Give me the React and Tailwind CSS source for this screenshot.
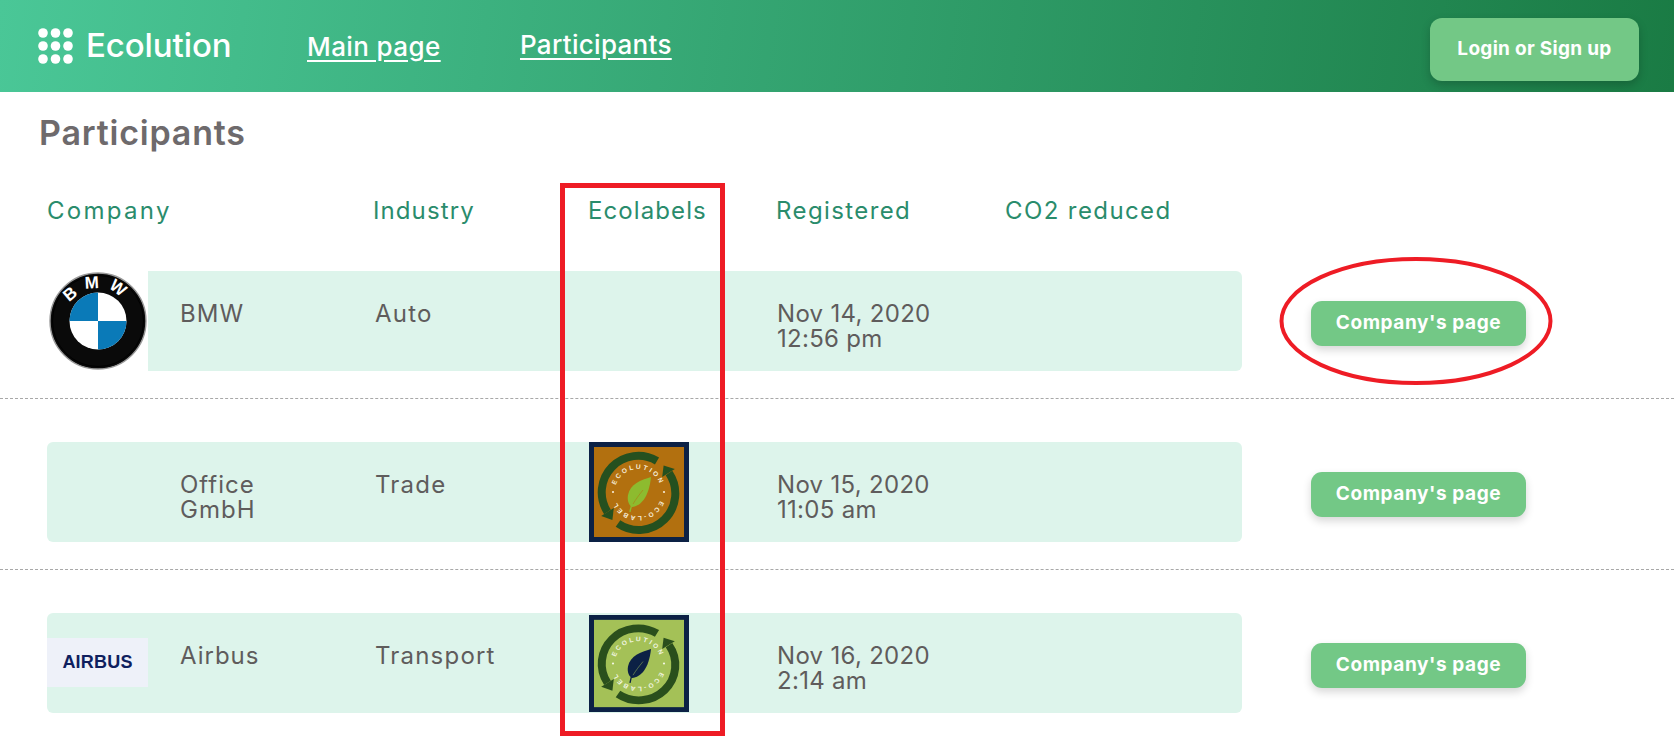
const rows = [
  { name: ['BMW'], industry: 'Auto', date: 'Nov 14, 2020', time: '12:56 pm', logo: 'bmw' },
  { name: ['Office', 'GmbH'], industry: 'Trade', date: 'Nov 15, 2020', time: '11:05 am', label: { bg: '#b2700f', ring: '#25501f', leaf: '#8dbb2f', vein: '#b2700f', text: '#f5ecd8', h: 'h-[100px]' } },
  { name: ['Airbus'], industry: 'Transport', date: 'Nov 16, 2020', time: '2:14 am', logo: 'airbus', label: { bg: '#a4c157', ring: '#2a4f1c', leaf: '#0c2145', vein: '#a4c157', text: '#f2f6e2', h: 'h-[97px]' } },
]

function BmwLogo() {
  return (
    <div className="w-[101px] h-[100px] bg-white flex items-center justify-center">
      <svg width="98" height="98" viewBox="0 0 98 98">
        <circle cx="49" cy="49" r="48" fill="#0a0a0a" stroke="#9a9a9a" strokeWidth="1.4" />
        <circle cx="49" cy="49" r="45.5" fill="none" stroke="#000" strokeWidth="1" />
        <circle cx="49" cy="49" r="28.5" fill="#fff" />
        <path d="M49 49V20.5A28.5 28.5 0 0 0 20.5 49Z" fill="#0a7ab8" />
        <path d="M49 49V77.500A28.5 28.5 0 0 0 77.500 49Z" fill="#0a7ab8" />
        <path id="bmwArc" d="M16 49A33 33 0 0 1 82 49" fill="none" />
        <text fill="#fff" fontSize="17" fontWeight="700" fontFamily="Liberation Sans, sans-serif" textAnchor="middle">
          <textPath href="#bmwArc" startOffset="50%" letterSpacing="8">BMW</textPath>
        </text>
      </svg>
    </div>
  )
}

function AirbusLogo() {
  return (
    <div className="w-[101px] h-[49px] mt-[25px] bg-[#eef1f9] flex items-center justify-center">
      <span className="font-['Liberation_Sans',sans-serif] font-bold text-[18px] tracking-[0.2px] text-[#0f1f5f]">AIRBUS</span>
    </div>
  )
}

function EcoLabel({ id, bg, ring, leaf, vein, text, h }) {
  return (
    <svg className={`w-[100px] ${h}`} viewBox="0 0 100 100" preserveAspectRatio="none">
      <rect x="2.5" y="2.5" width="95" height="95" fill={bg} stroke="#0c2145" strokeWidth="5" />
      <path d="M68 19A36.5 36.5 0 0 0 18.5 70" fill="none" stroke={ring} strokeWidth="8" />
      <path d="M29 81.5A36.5 36.5 0 0 0 80 31" fill="none" stroke={ring} strokeWidth="8" />
      <polygon points="12.2,74 24.8,66 23.4,78" fill={ring} />
      <polygon points="85.8,27 73.2,35 74.6,23.4" fill={ring} />
      <path d="M62 35C52 38 41 42 39 53C38 59 40 63 43 65C52 64 60 55 62 35Z" fill={leaf} />
      <path d="M41 70C42 62 46 55 52 49" fill="none" stroke={leaf} strokeWidth="1.4" />
      <path d="M44 62C47 57 50 53 54 48" fill="none" stroke={vein} strokeWidth="0.5" />
      <path id={id} d="M25.5 50.5A23.5 23.5 0 1 1 72.5 50.5A23.5 23.5 0 1 1 25.5 50.5" fill="none" />
      <text fill={text} fontSize="6.6" fontWeight="700" fontFamily="Liberation Sans Narrow, Liberation Sans, sans-serif" textAnchor="middle" letterSpacing="2.2">
        <textPath href={`#${id}`} startOffset="25%">ECOLUTION</textPath>
      </text>
      <text fill={text} fontSize="6.6" fontWeight="700" fontFamily="Liberation Sans Narrow, Liberation Sans, sans-serif" textAnchor="middle" letterSpacing="2">
        <textPath href={`#${id}`} startOffset="75%">ECO-LABEL</textPath>
      </text>
      <circle cx="24" cy="50" r="1.1" fill={text} />
      <circle cx="75" cy="50" r="1.1" fill={text} />
    </svg>
  )
}

function Row({ row, index }) {
  return (
    <div className={`flex pl-[47px] pb-[27px] ${index > 0 ? 'pt-[43px]' : ''} ${index < 2 ? 'border-b border-dashed border-[#a8a8a8]' : ''}`}>
      <div className="w-[1195px] h-[100px] bg-[#ddf4eb] rounded-md grid grid-cols-[101px_227px_214px_188px_1fr] text-[24px] leading-[25px] text-[#5f5c5c]">
        <div>
          {row.logo === 'bmw' && <BmwLogo />}
          {row.logo === 'airbus' && <AirbusLogo />}
        </div>
        <div className="pl-8 pt-[30px] tracking-[1px]">
          {row.name.map((n) => <div key={n}>{n}</div>)}
        </div>
        <div className="pt-[30px] tracking-[1.2px]">{row.industry}</div>
        <div className="flex items-center">
          {row.label && <EcoLabel id={`label${index}`} {...row.label} />}
        </div>
        <div className="pt-[30px] tracking-[0.3px]">
          <div>{row.date}</div>
          <div>{row.time}</div>
        </div>
      </div>
      <div className="ml-[69px] pt-[30px]">
        <button className="w-[215px] h-[45px] rounded-[11px] bg-[#73c886] text-white text-[19px] tracking-[0.6px] font-bold shadow-[0_4px_8px_rgba(0,0,0,0.16)]">
          Company's page
        </button>
      </div>
    </div>
  )
}

export default function App() {
  return (
    <div className="relative w-[1674px] h-[753px] overflow-hidden bg-white font-['Inter',sans-serif]">
      <header className="h-[92px] flex items-center bg-[linear-gradient(98deg,#4ac797,#1a7b44)] text-white">
        <svg className="ml-[38px] w-[35px] h-[36px]" viewBox="0 0 35 36" fill="#fff">
          {[5, 18, 31].map((y) => [5, 17.5, 30].map((x) => <circle key={`${x}-${y}`} cx={x} cy={y} r="4.8" />))}
        </svg>
        <span className="ml-[13px] w-[221px] text-[33px] font-medium tracking-[-0.1px]">Ecolution</span>
        <a className="w-[213px] text-[26px] font-medium tracking-[0.4px] underline underline-offset-4">Main page</a>
        <a className="mb-[4px] text-[26px] font-medium tracking-[0.3px] underline underline-offset-4">Participants</a>
        <button className="ml-auto mr-[35px] mt-[7px] w-[209px] h-[63px] rounded-[12px] bg-[#73c886] text-[19px] tracking-[0.3px] font-bold shadow-[0_4px_10px_rgba(0,0,0,0.2)]">
          Login or Sign up
        </button>
      </header>

      <h1 className="mt-[21px] ml-[39px] text-[34px] tracking-[0.8px] leading-[40px] font-semibold text-[#6e6a6c]">Participants</h1>

      <div className="mt-[38px] h-[40px] flex items-center pl-[47px] text-[24px] tracking-[1.1px] text-[#2a8c6c]">
        <div className="w-[326px] tracking-[2.3px]">Company</div>
        <div className="w-[215px]">Industry</div>
        <div className="w-[188px]">Ecolabels</div>
        <div className="w-[229px] tracking-[1.4px]">Registered</div>
        <div className="tracking-[1.4px]">CO2 reduced</div>
      </div>

      <div className="mt-[40px]">
        {rows.map((row, i) => <Row key={row.industry} row={row} index={i} />)}
      </div>

      {/* hand-drawn annotations on top of the page */}
      <div className="absolute left-[560px] top-[183px] w-[165px] h-[553px] border-[5px] border-[#ee1c25]" />
      <svg className="absolute left-[1278px] top-[256px]" width="276" height="130" viewBox="0 0 276 130" fill="none">
        <ellipse cx="138" cy="65" rx="134.5" ry="62" stroke="#ee1c25" strokeWidth="4" />
      </svg>
    </div>
  )
}
